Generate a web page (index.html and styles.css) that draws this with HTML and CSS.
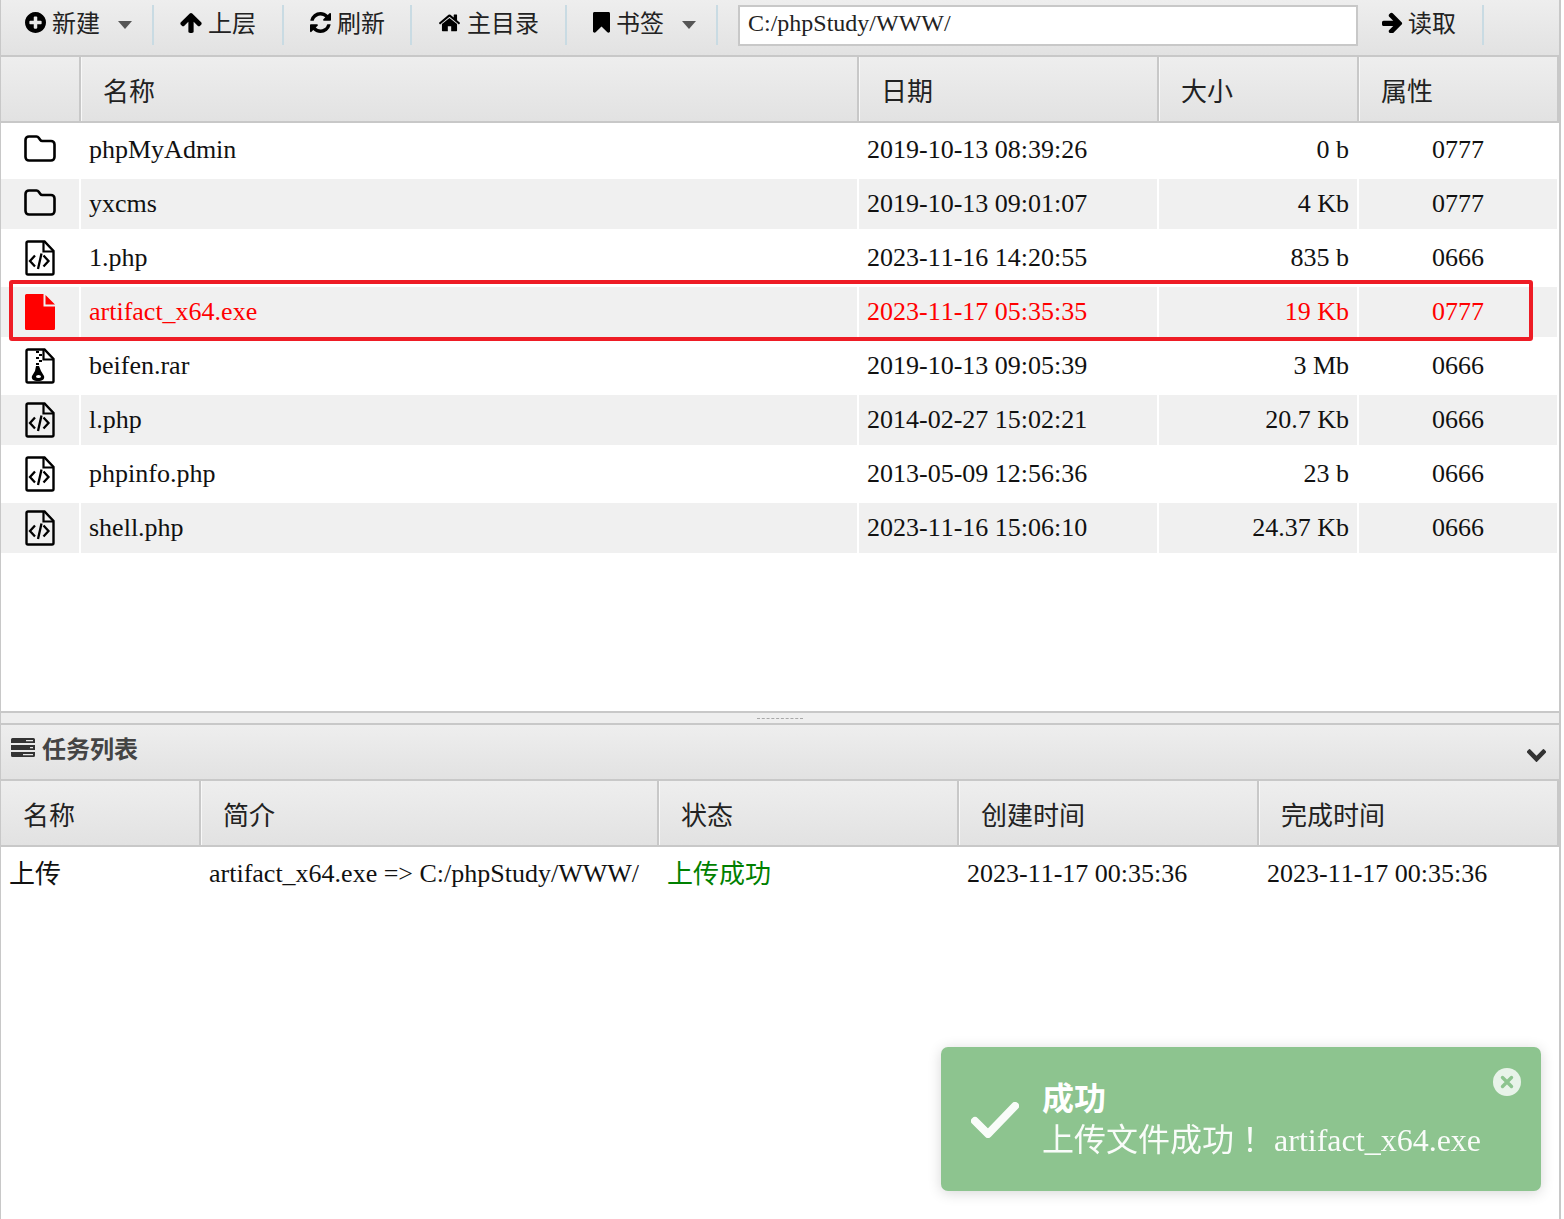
FILE: index.html
```html
<!DOCTYPE html>
<html lang="zh-CN">
<head>
<meta charset="utf-8">
<title>文件管理</title>
<link rel="stylesheet" href="styles.css">
</head>
<body>
<svg class="defs" width="0" height="0" aria-hidden="true">
  <symbol id="i-folder" viewBox="0 0 32 27"><path d="M5 1.500h7.500c1 0 1.600.4 2.200 1.200l1.600 2.300c.5.7 1 1 2 1H27c2 0 3.500 1.500 3.500 3.500V22c0 2-1.500 3.500-3.500 3.500H5c-2 0-3.500-1.500-3.500-3.500V5C1.500 3 3 1.500 5 1.500z" fill="none" stroke="#000" stroke-width="2.600"/></symbol>
  <symbol id="i-code" viewBox="0 0 30 36"><path d="M3 1.500h16.500l9 9.500V33a1.500 1.500 0 0 1-1.500 1.500H3A1.500 1.500 0 0 1 1.500 33V3A1.500 1.500 0 0 1 3 1.500z" fill="none" stroke="#000" stroke-width="2.400"/><path d="M18.500 2v9.500h9.500" fill="none" stroke="#000" stroke-width="2.200"/><path d="M10 15.500l-5 5.500 5 5.500M18.500 15.500l5 5.500-5 5.500M16.500 13.500l-3.500 15.500" fill="none" stroke="#000" stroke-width="2.300"/></symbol>
  <symbol id="i-zip" viewBox="0 0 30 36"><path d="M3 1.500h16.500l9 9.500V33a1.500 1.500 0 0 1-1.500 1.500H3A1.500 1.500 0 0 1 1.500 33V3A1.500 1.500 0 0 1 3 1.500z" fill="none" stroke="#000" stroke-width="2.400"/><path d="M18.500 2v9.500h9.500" fill="none" stroke="#000" stroke-width="2.200"/><path d="M11 3h3v2h-3zM14 6h3v2h-3zM11 9h3v2h-3zM14 12h3v2h-3zM11 15h3v2h-3zM14 18h-3l-1 5-3 5c-1 3 1.500 5 6 5s7-2 6-5l-3-5z"/><ellipse cx="13.500" cy="28.500" rx="2.500" ry="1.600" fill="#fff"/></symbol>
  <symbol id="i-file-red" viewBox="0 0 30 36"><path d="M1.500 0H18.500V12.500H30V34.500a1.500 1.500 0 0 1-1.500 1.500H1.500A1.500 1.500 0 0 1 0 34.500V1.500A1.500 1.500 0 0 1 1.500 0zM20.500 1l9.500 9.500h-9.500z" fill="#f00"/></symbol>
  <symbol id="i-plus" viewBox="128 128 1536 1536"><path fill-rule="evenodd" d="M1344 960v-128q0-26-19-45t-45-19h-256v-256q0-26-19-45t-45-19h-128q-26 0-45 19t-19 45v256h-256q-26 0-45 19t-19 45v128q0 26 19 45t45 19h256v256q0 26 19 45t45 19h128q26 0 45-19t19-45v-256h256q26 0 45-19t19-45zm320-64q0 209-103 385.500t-279.500 279.500-385.500 103-385.500-103-279.500-279.500-103-385.500 103-385.500 279.500-279.500 385.500-103 385.500 103 279.500 279.500 103 385.500z"/></symbol>
  <symbol id="i-up" viewBox="117 128 1558 1536"><path d="M1675 971q0 51-37 90l-75 75q-38 38-91 38-54 0-90-38l-294-293v704q0 52-37.500 84.500t-90.500 32.500h-128q-53 0-90.500-32.500t-37.500-84.500v-704l-294 293q-36 38-90 38t-90-38l-75-75q-38-38-38-90 0-53 38-91l651-651q35-37 90-37 54 0 91 37l651 651q37 39 37 91z"/></symbol>
  <symbol id="i-refresh" viewBox="128 128 1536 1536"><path d="M1639 1056q0 5-1 7-64 268-268 434.500t-478 166.500q-146 0-282.500-55t-243.500-157l-129 129q-19 19-45 19t-45-19-19-45v-448q0-26 19-45t45-19h448q26 0 45 19t19 45-19 45l-137 137q71 66 161 102t187 36q134 0 250-65t186-179q11-17 53-117 8-23 30-23h192q13 0 22.500 9.500t9.500 22.500zm25-800v448q0 26-19 45t-45 19h-448q-26 0-45-19t-19-45 19-45l138-138q-148-137-349-137-134 0-250 65t-186 179q-11 17-53 117-8 23-30 23h-199q-13 0-22.500-9.500t-9.500-22.500v-7q65-268 270-434.500t480-166.500q146 0 284 55.500t245 156.500l130-129q19-19 45-19t45 19 19 45z"/></symbol>
  <symbol id="i-home" viewBox="96 192 1600 1344"><path d="M1472 992v480q0 26-19 45t-45 19h-384v-384h-256v384h-384q-26 0-45-19t-19-45v-480q0-1 .5-3t.5-3l575-474 575 474q1 2 1 6zm223-69l-62 74q-8 9-21 11h-3q-13 0-21-7l-692-577-692 577q-12 8-24 7-13-2-21-11l-62-74q-8-10-7-23.500t11-21.500l719-599q32-26 76-26t76 26l244 204v-195q0-14 9-23t23-9h192q14 0 23 9t9 23v408l219 182q10 8 11 21.500t-7 23.500z"/></symbol>
  <symbol id="i-bookmark" viewBox="256 128 1280 1536" preserveAspectRatio="none"><path d="M1420 128q23 0 44 9 33 13 52.500 41t19.500 62v1289q0 34-19.500 62t-52.500 41q-19 8-44 8-48 0-83-32l-441-424-441 424q-36 33-83 33-23 0-44-9-33-13-52.500-41t-19.500-62v-1289q0-34 19.500-62t52.500-41q21-9 44-9h1048z"/></symbol>
  <symbol id="i-right" viewBox="128 128 1536 1536"><path d="M1600 960q0 54-37 91l-651 651q-39 37-91 37-51 0-90-37l-75-75q-38-38-38-91t38-91l293-293h-704q-52 0-84.500-37.500t-32.500-90.500v-128q0-53 32.500-90.500t84.500-37.500h704l-293-294q-38-36-38-90t38-90l75-75q38-38 90-38 53 0 91 38l651 651q37 35 37 90z"/></symbol>
  <symbol id="i-chevron" viewBox="109 460 1574 1108" preserveAspectRatio="none"><path d="M1683 808l-742 741q-19 19-45 19t-45-19l-742-741q-19-19-19-45.500t19-45.500l166-165q19-19 45-19t45 19l531 531 531-531q19-19 45-19t45 19l166 165q19 19 19 45.500t-19 45.500z"/></symbol>
</svg>

<div class="app">
  <nav class="toolbar">
    <div class="tool tool-new"><svg class="ti ti-21"><use href="#i-plus"/></svg><span>新建</span><i class="caret caret-a"></i></div>
    <div class="tool tool-up"><svg class="ti ti-22"><use href="#i-up"/></svg><span>上层</span></div>
    <div class="tool tool-refresh"><svg class="ti ti-21"><use href="#i-refresh"/></svg><span>刷新</span></div>
    <div class="tool tool-home"><svg class="ti ti-21"><use href="#i-home"/></svg><span>主目录</span></div>
    <div class="tool tool-mark"><svg class="ti ti-book"><use href="#i-bookmark"/></svg><span>书签</span><i class="caret caret-b"></i></div>
    <div class="address">C:/phpStudy/WWW/</div>
    <div class="tool tool-read"><svg class="ti ti-21"><use href="#i-right"/></svg><span>读取</span></div>
  </nav>

  <div class="thead file-cols">
    <div class="th"></div>
    <div class="th">名称</div>
    <div class="th">日期</div>
    <div class="th">大小</div>
    <div class="th">属性</div>
  </div>

  <section class="file-list">
    <div class="row">
      <div class="cell icon"><svg class="ico-folder"><use href="#i-folder"/></svg></div>
      <div class="cell">phpMyAdmin</div><div class="cell">2019-10-13 08:39:26</div><div class="cell size">0 b</div><div class="cell attr">0777</div>
    </div>
    <div class="row">
      <div class="cell icon"><svg class="ico-folder"><use href="#i-folder"/></svg></div>
      <div class="cell">yxcms</div><div class="cell">2019-10-13 09:01:07</div><div class="cell size">4 Kb</div><div class="cell attr">0777</div>
    </div>
    <div class="row">
      <div class="cell icon"><svg class="ico-file"><use href="#i-code"/></svg></div>
      <div class="cell">1.php</div><div class="cell">2023-11-16 14:20:55</div><div class="cell size">835 b</div><div class="cell attr">0666</div>
    </div>
    <div class="row row-new">
      <div class="cell icon"><svg class="ico-file"><use href="#i-file-red"/></svg></div>
      <div class="cell">artifact_x64.exe</div><div class="cell">2023-11-17 05:35:35</div><div class="cell size">19 Kb</div><div class="cell attr">0777</div>
    </div>
    <div class="row">
      <div class="cell icon"><svg class="ico-file"><use href="#i-zip"/></svg></div>
      <div class="cell">beifen.rar</div><div class="cell">2019-10-13 09:05:39</div><div class="cell size">3 Mb</div><div class="cell attr">0666</div>
    </div>
    <div class="row">
      <div class="cell icon"><svg class="ico-file"><use href="#i-code"/></svg></div>
      <div class="cell">l.php</div><div class="cell">2014-02-27 15:02:21</div><div class="cell size">20.7 Kb</div><div class="cell attr">0666</div>
    </div>
    <div class="row">
      <div class="cell icon"><svg class="ico-file"><use href="#i-code"/></svg></div>
      <div class="cell">phpinfo.php</div><div class="cell">2013-05-09 12:56:36</div><div class="cell size">23 b</div><div class="cell attr">0666</div>
    </div>
    <div class="row">
      <div class="cell icon"><svg class="ico-file"><use href="#i-code"/></svg></div>
      <div class="cell">shell.php</div><div class="cell">2023-11-16 15:06:10</div><div class="cell size">24.37 Kb</div><div class="cell attr">0666</div>
    </div>
  </section>

  <div class="splitter"><i class="grip"></i></div>

  <header class="panel-head">
    <svg class="tasks-ico" viewBox="0 0 24 19"><path d="M0 1.500A1.500 1.500 0 0 1 1.500 0h21A1.500 1.500 0 0 1 24 1.500V5H0zM0 7h24v5H0zM0 14h24v3.500a1.500 1.500 0 0 1-1.500 1.500h-21A1.500 1.500 0 0 1 0 17.500z" fill="#333"/><path d="M15 2h7v1.200h-7zM19 9h3v1.200h-3zM12 16h10v1.200H12z" fill="#e8e8e8"/></svg>
    <span class="panel-title">任务列表</span>
    <svg class="chevron"><use href="#i-chevron"/></svg>
  </header>

  <div class="thead task-cols">
    <div class="th">名称</div>
    <div class="th">简介</div>
    <div class="th">状态</div>
    <div class="th">创建时间</div>
    <div class="th">完成时间</div>
  </div>
  <div class="task-row task-cols">
    <div class="td cjk">上传</div>
    <div class="td">artifact_x64.exe =&gt; C:/phpStudy/WWW/</div>
    <div class="td cjk ok">上传成功</div>
    <div class="td">2023-11-17 00:35:36</div>
    <div class="td">2023-11-17 00:35:36</div>
  </div>
</div>

<div class="highlight"></div>

<aside class="toast">
  <svg class="toast-check" viewBox="0 0 50 38"><path d="M5 20l13 13L45 5" fill="none" stroke="#fff" stroke-width="8" stroke-linecap="round" stroke-linejoin="round"/></svg>
  <div class="toast-body">
    <div class="toast-title">成功</div>
    <div class="toast-msg">上传文件成功<span class="bang" lang="zh-TW">！</span> artifact_x64.exe</div>
  </div>
  <svg class="toast-close" viewBox="0 0 28 28"><circle cx="14" cy="14" r="14" fill="#e8f3e9"/><path d="M9.500 9.500l9 9M18.500 9.500l-9 9" stroke="#8dc48f" stroke-width="3.400" stroke-linecap="round"/></svg>
</aside>
</body>
</html>
```

FILE: styles.css
```css
* { box-sizing: border-box; }
html, body { margin: 0; padding: 0; background: #fff; height: 100%; overflow: hidden; }
body {
  position: relative;
  font-family: "Liberation Serif", "Noto Sans CJK SC", serif;
  font-size: 26px;
  font-kerning: none;
  color: #111;
}
.defs { position: absolute; }

.app {
  width: 1561px;
  height: 1219px;
  border-left: 1px solid #c8c8c8;
  border-right: 2px solid #c8c8c8;
  display: flex;
  flex-direction: column;
}

/* toolbar */
.toolbar {
  height: 57px;
  flex: none;
  display: flex;
  align-items: flex-start;
  padding-top: 5px;
  background: linear-gradient(#eeeeee, #e2e2e2);
  border-bottom: 2px solid #c8c8c8;
}
.tool {
  height: 40px;
  display: flex;
  align-items: center;
  gap: 6px;
  padding-bottom: 5px;
  border-right: 2px solid #c9dbe3;
  font-size: 24px;
  color: #222;
}
.tool span { margin-bottom: 2px; }
.ti { flex: none; fill: #000; }
.ti-21 { width: 21px; height: 21px; }
.ti-22 { width: 22px; height: 21px; }
.ti-book { width: 17px; height: 21px; }
.tool-new { width: 153px; padding-left: 24px; }
.tool-up { width: 130px; padding-left: 26px; }
.tool-refresh { width: 128px; padding-left: 26px; }
.tool-home { width: 155px; padding-left: 27px; gap: 7px; }
.tool-mark { width: 151px; padding-left: 26px; }
.tool-read { width: 126px; padding-left: 24px; gap: 5px; }
.caret {
  width: 0;
  height: 0;
  margin-left: 12px;
  margin-top: 5px;
  border-left: 7.500px solid transparent;
  border-right: 7.500px solid transparent;
  border-top: 8px solid #555;
}
.caret-b { border-left-width: 7px; border-right-width: 7px; }
.address {
  width: 620px;
  height: 41px;
  margin-left: 20px;
  padding-left: 8px;
  background: #fff;
  border: 2px solid #c8c8c8;
  font-size: 24px;
  line-height: 33px;
  color: #222;
}

/* table heads */
.thead {
  height: 66px;
  flex: none;
  display: grid;
  grid-auto-rows: 64px;
  background: linear-gradient(#eeeeee, #e2e2e2);
  border-bottom: 2px solid #c8c8c8;
}
.file-cols { grid-template-columns: 80px 778px 300px 200px 200px; }
.task-cols { grid-template-columns: 200px 458px 300px 300px 300px; }
.th {
  padding-left: 21px;
  line-height: 72px;
  color: #222;
  border-left: 1px solid #f8f8f8;
  border-right: 2px solid #c8c8c8;
}
.th:first-child { border-left: 0; padding-left: 22px; }

/* file rows */
.file-list { height: 588px; flex: none; padding-top: 2px; }
.row {
  display: grid;
  grid-template-columns: 78px 776px 298px 198px 198px;
  column-gap: 2px;
  width: 1556px;
  height: 50px;
  margin-bottom: 4px;
  line-height: 50px;
}
.row:nth-child(even) .cell { background: #f0f0f0; }
.cell { padding: 0 8px; white-space: nowrap; }
.icon { display: flex; align-items: center; justify-content: center; padding: 0; }
.ico-folder { width: 32px; height: 27px; margin-top: -3px; }
.ico-file { width: 30px; height: 36px; margin-right: 1px; }
.size { text-align: right; }
.attr { text-align: center; padding: 0; }
.row-new { color: #f00; }

/* splitter */
.splitter {
  height: 14px;
  flex: none;
  display: flex;
  justify-content: center;
  background: #eeeeee;
  border-top: 2px solid #c8c8c8;
  border-bottom: 2px solid #c8c8c8;
}
.grip { width: 46px; height: 0; margin-top: 5px; border-top: 1px dashed #a8a8a8; }

/* task panel */
.panel-head {
  height: 56px;
  flex: none;
  display: flex;
  align-items: center;
  padding: 0 13px 8px 10px;
  background: linear-gradient(#eeeeee, #e2e2e2);
  border-bottom: 2px solid #c8c8c8;
}
.tasks-ico { width: 24px; height: 19px; margin-top: -2px; flex: none; }
.panel-title { margin: 0 0 2px 7px; font-size: 24px; font-weight: 700; color: #444; }
.chevron { width: 19px; height: 14px; margin-left: auto; margin-top: 14px; fill: #333; }
.task-row { display: grid; line-height: 52px; }
.td { padding: 1px 0 0 8px; white-space: nowrap; }
.td.cjk { padding-top: 2px; }
.ok { color: #008000; }

/* annotation over the list */
.highlight {
  position: absolute;
  left: 9px;
  top: 280px;
  width: 1524px;
  height: 61px;
  border: 4px solid #ee1c25;
  border-radius: 3px;
}

/* notification */
.toast {
  position: absolute;
  left: 941px;
  top: 1047px;
  width: 600px;
  height: 144px;
  display: flex;
  align-items: center;
  padding-left: 29px;
  background: #8dc48f;
  border-radius: 7px;
  box-shadow: 0 2px 14px rgba(0, 0, 0, .16);
  color: #fff;
}
.toast-check { width: 50px; height: 38px; flex: none; margin-top: 2px; opacity: .95; filter: blur(.6px); }
.toast-body { margin-left: 22px; font-size: 32px; line-height: 42px; }
.toast-title { font-weight: 700; }
.toast-msg { margin-top: -1px; opacity: .95; white-space: nowrap; }
.bang { font-family: "Noto Sans CJK TC", sans-serif; line-height: 0; }
.toast-close { position: absolute; right: 20px; top: 21px; width: 28px; height: 28px; }
```
